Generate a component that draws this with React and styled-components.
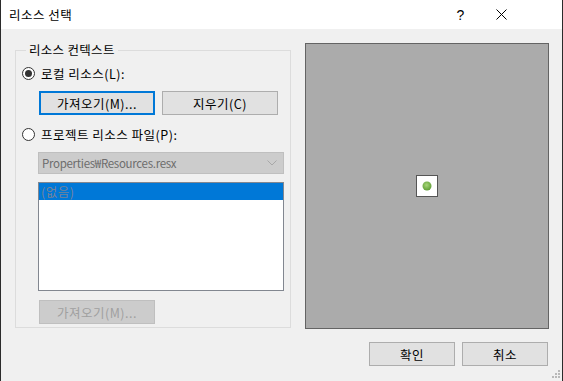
import styled, { createGlobalStyle } from "styled-components";

const Global = createGlobalStyle`
  html, body { margin: 0; padding: 0; background: #f0f0f0; }
  body {
    font-family: "Noto Sans CJK KR", "Noto Sans", sans-serif;
    font-size: 12.5px;
    letter-spacing: 0.5px;
    color: #000;
  }
`

const Window = styled.div`
  position: relative;
  width: 563px;
  height: 381px;
  box-sizing: border-box;
  border-left: 1px solid #2b2b2b;
  border-right: 1px solid #2b2b2b;
  background: #f0f0f0;
  display: flex;
  flex-direction: column;
  overflow: hidden;
`

const TitleBar = styled.div`
  height: 29px;
  flex: none;
  background: #fff;
  display: flex;
  align-items: center;
  padding-left: 8px;
  padding-right: 40px;
`

const TitleText = styled.div`
  flex: 1;
  line-height: 16px;
`

const TitleButton = styled.div`
  width: 41px;
  height: 29px;
  display: flex;
  align-items: center;
  justify-content: center;
  font-family: "Liberation Sans", sans-serif;
  font-size: 14px;
  letter-spacing: 0;
`

const Body = styled.div`
  flex: 1;
  display: flex;
  flex-direction: column;
  padding: 14px 13px 0 14px;
`

const MainRow = styled.div`
  display: flex;
  gap: 14px;
  height: 286px;
`

const GroupBox = styled.fieldset`
  margin: 0;
  width: 276px;
  height: 285px;
  box-sizing: border-box;
  border: 1px solid #dcdcdc;
  padding: 0 6px;
  display: flex;
  flex-direction: column;
  min-width: 0;
`

const Legend = styled.legend`
  margin-left: 4px;
  padding: 0 3px;
  line-height: 14px;
  letter-spacing: 0.3px;
`

const RadioRow = styled.label`
  display: flex;
  align-items: center;
  gap: 6px;
  height: 16px;
  margin-top: ${p => p.top}px;
`

const RadioCircle = styled.span`
  width: 13px;
  height: 13px;
  box-sizing: border-box;
  border: 1px solid #333;
  border-radius: 50%;
  background: #fff;
  display: flex;
  align-items: center;
  justify-content: center;
  &::after {
    content: "";
    width: 7px;
    height: 7px;
    border-radius: 50%;
    background: ${p => (p.checked ? "#333" : "transparent")};
  }
`

const ButtonRow = styled.div`
  display: flex;
  gap: 7px;
  margin-top: ${p => p.top}px;
  padding-left: 17px;
`

const Button = styled.div`
  width: ${p => p.w}px;
  height: ${p => p.h}px;
  box-sizing: border-box;
  display: flex;
  align-items: center;
  justify-content: center;
  background: ${p => (p.disabled ? "#cccccc" : "#e1e1e1")};
  border: ${p => (p.primary ? "2px solid #0078d7" : p.disabled ? "1px solid #bfbfbf" : "1px solid #adadad")};
  color: ${p => (p.disabled ? "#a0a0a0" : "#000")};
`

const Combo = styled.div`
  margin-top: 10px;
  margin-left: 16px;
  width: 246px;
  height: 22px;
  box-sizing: border-box;
  border: 1px solid #bfbfbf;
  background: #cccccc;
  color: #6d6d6d;
  display: flex;
  align-items: center;
  justify-content: space-between;
  padding: 0 6px 0 3px;
  font-size: 11.5px;
  letter-spacing: -0.3px;
`

const ListBox = styled.div`
  margin-top: 8px;
  margin-left: 16px;
  width: 246px;
  height: 109px;
  box-sizing: border-box;
  border: 1px solid #828790;
  background: #fff;
`

const ListItem = styled.div`
  height: 17px;
  line-height: 17px;
  padding-left: 2px;
  background: #0078d7;
  color: #75839a;
`

const DisabledWrap = styled.div`
  margin-top: 9px;
  padding-left: 17px;
`

const Preview = styled.div`
  width: 244px;
  height: 286px;
  box-sizing: border-box;
  border: 1px solid #646464;
  background: #ababab;
  display: flex;
  align-items: center;
  justify-content: center;
`

const Swatch = styled.div`
  width: 22px;
  height: 22px;
  box-sizing: border-box;
  border: 1px solid #555;
  background: #fff;
  display: flex;
  align-items: center;
  justify-content: center;
`

const Footer = styled.div`
  display: flex;
  justify-content: flex-end;
  gap: 7px;
  margin-top: 13px;
  padding-right: 1px;
`

const Grip = styled.svg`
  position: absolute;
  right: 1px;
  bottom: 2px;
`

export default function App() {
  return (
    <>
      <Global />
      <Window>
        <TitleBar>
          <TitleText>리소스 선택</TitleText>
          <TitleButton>?</TitleButton>
          <TitleButton>
            <svg width="11" height="11" viewBox="0 0 11 11">
              <path d="M0.5 0.5 L10.5 10.5 M10.5 0.5 L0.5 10.5" stroke="#000" strokeWidth="1" />
            </svg>
          </TitleButton>
        </TitleBar>
        <Body>
          <MainRow>
            <GroupBox>
              <Legend>리소스 컨텍스트</Legend>
              <RadioRow top={8}>
                <RadioCircle checked />
                로컬 리소스(L):
              </RadioRow>
              <ButtonRow top={10}>
                <Button w={116} h={24} primary>가져오기(M)...</Button>
                <Button w={116} h={24}>지우기(C)</Button>
              </ButtonRow>
              <RadioRow top={11}>
                <RadioCircle />
                프로젝트 리소스 파일(P):
              </RadioRow>
              <Combo>
                <span>Properties₩Resources.resx</span>
                <svg width="10" height="6" viewBox="0 0 10 6">
                  <path d="M0.5 0.5 L5 5 L9.5 0.5" fill="none" stroke="#a8a8a8" strokeWidth="1" />
                </svg>
              </Combo>
              <ListBox>
                <ListItem>(없음)</ListItem>
              </ListBox>
              <DisabledWrap>
                <Button w={116} h={24} disabled>가져오기(M)...</Button>
              </DisabledWrap>
            </GroupBox>
            <Preview>
              <Swatch>
                <svg width="10" height="10" viewBox="0 0 10 10">
                  <defs>
                    <radialGradient id="g" cx="45%" cy="40%" r="60%">
                      <stop offset="0%" stopColor="#a8d67a" />
                      <stop offset="100%" stopColor="#5f9e35" />
                    </radialGradient>
                  </defs>
                  <circle cx="5" cy="5" r="4.5" fill="url(#g)" />
                </svg>
              </Swatch>
            </Preview>
          </MainRow>
          <Footer>
            <Button w={86} h={24}>확인</Button>
            <Button w={86} h={24}>취소</Button>
          </Footer>
        </Body>
        <Grip width="9" height="9" viewBox="0 0 9 9">
          <rect x="6" y="0" width="2" height="2" fill="#b8b8b8" />
          <rect x="3" y="3" width="2" height="2" fill="#b8b8b8" />
          <rect x="6" y="3" width="2" height="2" fill="#b8b8b8" />
          <rect x="0" y="6" width="2" height="2" fill="#b8b8b8" />
          <rect x="3" y="6" width="2" height="2" fill="#b8b8b8" />
          <rect x="6" y="6" width="2" height="2" fill="#b8b8b8" />
        </Grip>
      </Window>
    </>
  );
}
